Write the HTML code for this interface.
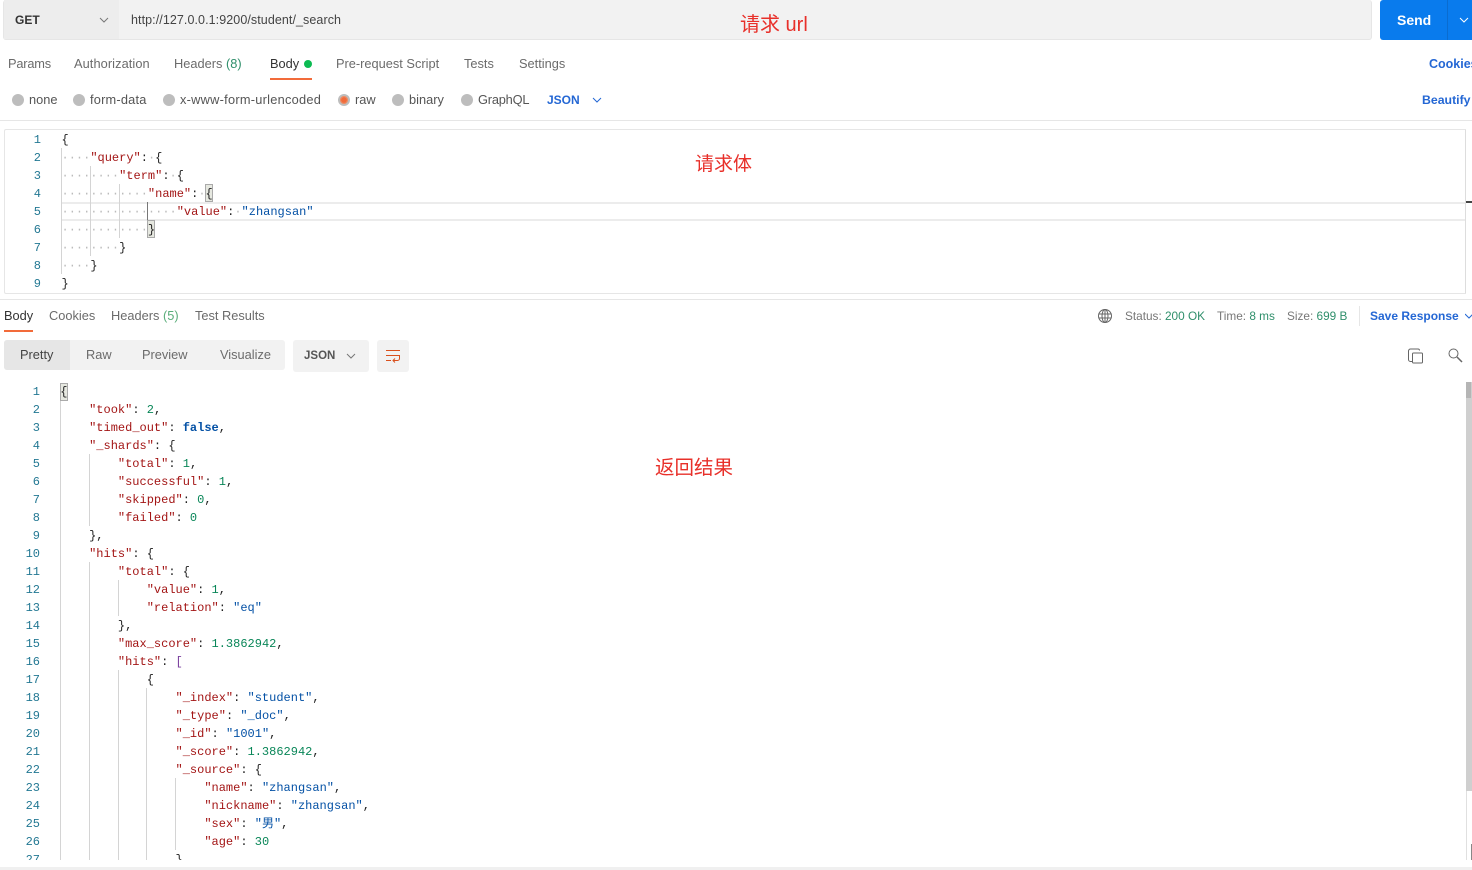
<!DOCTYPE html>
<html><head><meta charset="utf-8"><style>
html,body{margin:0;padding:0;background:#fff;width:1472px;height:870px;overflow:hidden}
body{position:relative;font-family:"Liberation Sans",sans-serif;font-size:12.8px;color:#6b6b6b}
.a{position:absolute;white-space:nowrap;line-height:16px}
.r{position:absolute;width:12px;height:12px;border-radius:50%;background:#bdbdbd;top:94px}
.g{position:absolute;width:1px;background:#d4d4d4}
pre{position:absolute;margin:0;font-family:"Liberation Mono","Noto Sans CJK SC",monospace;font-size:12px;line-height:18px;color:#222}
pre div{height:18px;white-space:pre}
.n{color:#237893;text-align:right}
.k{color:#a31515}.s{color:#0451a5}.v{color:#098658}.b{color:#0451a5;font-weight:bold}.d{color:#bbb}.p{color:#7a3e9d}
.t{color:#e8302a;font-family:"Liberation Sans","Noto Sans CJK SC",sans-serif;position:absolute;white-space:nowrap;line-height:26px}
.bl{color:#2467d4;font-weight:bold}
.gr{color:#2f8f6b}
</style></head><body>
<div style="position:absolute;left:3px;top:0;width:1367px;height:39px;background:#f2f2f2;border:1px solid #e6e6e6;border-top:0;border-radius:3px"></div>
<div style="position:absolute;left:4px;top:0;width:115px;height:39px;background:#ededed"></div>
<div class="a" style="left:15px;top:12px;font-weight:bold;color:#333;font-size:12px">GET</div>
<svg style="position:absolute;left:99px;top:17px" width="10" height="6"><path d="M1 1l4 4 4-4" fill="none" stroke="#777"/></svg>
<div class="a" style="left:131px;top:12px;color:#444;font-size:12.5px;letter-spacing:.08px">http://127.0.0.1:9200/student/_search</div>
<div style="position:absolute;left:1380px;top:0;width:92px;height:40px;background:#097bed;border-radius:3px 0 0 3px"></div>
<div style="position:absolute;left:1447px;top:0;width:1px;height:40px;background:#0a6cd0"></div>
<div class="a" style="left:1397px;top:12px;color:#fff;font-weight:bold;font-size:14px">Send</div>
<svg style="position:absolute;left:1459px;top:17px" width="10" height="6"><path d="M1 1l4 4 4-4" fill="none" stroke="#fff"/></svg>
<div class="t" style="left:740px;top:12px;font-size:20px">请求 url</div>

<div class="a" style="left:8px;top:56px;letter-spacing:-.2px">Params</div>
<div class="a" style="left:74px;top:56px;letter-spacing:.08px">Authorization</div>
<div class="a" style="left:174px;top:56px">Headers <span class="gr">(8)</span></div>
<div class="a" style="left:270px;top:56px;color:#333">Body</div>
<div style="position:absolute;left:304px;top:60px;width:8px;height:8px;border-radius:50%;background:#0cbb52"></div>
<div style="position:absolute;left:270px;top:78px;width:42px;height:2px;background:#f26b3a"></div>
<div class="a" style="left:336px;top:56px">Pre-request Script</div>
<div class="a" style="left:464px;top:56px">Tests</div>
<div class="a" style="left:519px;top:56px">Settings</div>
<div class="a bl" style="left:1429px;top:56px;font-size:12.5px">Cookies</div>

<div class="r" style="left:12px"></div><div class="a" style="left:29px;top:92px;color:#555">none</div>
<div class="r" style="left:73px"></div><div class="a" style="left:90px;top:92px;color:#555;letter-spacing:.2px">form-data</div>
<div class="r" style="left:163px"></div><div class="a" style="left:180px;top:92px;color:#555;letter-spacing:.25px">x-www-form-urlencoded</div>
<div class="r" style="left:338px"></div><div style="position:absolute;left:341px;top:97px;width:6px;height:6px;border-radius:50%;background:#f26b3a;outline:1px solid #f08a60"></div><div class="a" style="left:355px;top:92px;color:#555">raw</div>
<div class="r" style="left:392px"></div><div class="a" style="left:409px;top:92px;color:#555">binary</div>
<div class="r" style="left:461px"></div><div class="a" style="left:478px;top:92px;color:#555;letter-spacing:-.2px">GraphQL</div>
<div class="a bl" style="left:547px;top:92px;font-size:12px">JSON</div>
<svg style="position:absolute;left:592px;top:97px" width="10" height="6"><path d="M1 1l4 4 4-4" fill="none" stroke="#2467d4"/></svg>
<div class="a bl" style="left:1422px;top:92px;font-size:12.300px">Beautify</div>
<div style="position:absolute;left:0;top:120px;width:1472px;height:1px;background:#e6e6e6"></div>

<div style="position:absolute;left:4px;top:129px;width:1460px;height:163px;border:1px solid #e6e6e6;border-right:1px solid #ddd;border-radius:2px 0 0 2px"></div>
<div style="position:absolute;left:62px;top:202px;width:1403px;height:15px;border:solid #ececec;border-width:2px 0"></div>
<div style="position:absolute;left:1466px;top:201px;width:6px;height:2px;background:#444"></div>
<div class="g" style="left:61px;top:148px;height:126px"></div>
<div class="g" style="left:90px;top:166px;height:90px"></div>
<div class="g" style="left:119px;top:184px;height:54px"></div>
<div class="g" style="left:147px;top:202px;height:18px;background:#777"></div>
<div style="position:absolute;left:205px;top:184px;width:6px;height:16px;background:#e6e8e0;border:1px solid #aaa"></div>
<div style="position:absolute;left:147px;top:220px;width:6px;height:16px;background:#e6e8e0;border:1px solid #aaa"></div>
<pre class="n" style="left:10px;top:131px;width:31px"><div>1</div><div>2</div><div>3</div><div>4</div><div>5</div><div>6</div><div>7</div><div>8</div><div>9</div></pre>
<pre style="left:61.500px;top:131px"><div>{</div><div><span class="d">····</span><span class="k">"query"</span>:<span class="d">·</span>{</div><div><span class="d">········</span><span class="k">"term"</span>:<span class="d">·</span>{</div><div><span class="d">············</span><span class="k">"name"</span>:<span class="d">·</span>{</div><div><span class="d">················</span><span class="k">"value"</span>:<span class="d">·</span><span class="s">"zhangsan"</span></div><div><span class="d">············</span>}</div><div><span class="d">········</span>}</div><div><span class="d">····</span>}</div><div>}</div></pre>
<div class="t" style="left:695px;top:152px;font-size:19px">请求体</div>

<div style="position:absolute;left:0;top:299px;width:1472px;height:1px;background:#e6e6e6"></div>
<div class="a" style="left:4px;top:308px;color:#333">Body</div>
<div style="position:absolute;left:4px;top:330px;width:29px;height:2px;background:#f26b3a"></div>
<div class="a" style="left:49px;top:308px">Cookies</div>
<div class="a" style="left:111px;top:308px">Headers <span style="color:#5aad7a">(5)</span></div>
<div class="a" style="left:195px;top:308px">Test Results</div>
<svg style="position:absolute;left:1098px;top:309px" width="14" height="14" fill="none" stroke="#666"><circle cx="7" cy="7" r="6.5"/><ellipse cx="7" cy="7" rx="3" ry="6.5"/><path d="M1 5h12M1 9h12M7 .5v13"/></svg>
<div class="a" style="left:1125px;top:308px;font-size:11.800px;color:#777">Status: <span class="gr">200 OK</span></div>
<div class="a" style="left:1217px;top:308px;font-size:11.800px;color:#777">Time: <span class="gr">8 ms</span></div>
<div class="a" style="left:1287px;top:308px;font-size:11.800px;color:#777">Size: <span class="gr">699 B</span></div>
<div style="position:absolute;left:1359px;top:306px;width:1px;height:20px;background:#e6e6e6"></div>
<div class="a bl" style="left:1370px;top:308px;font-size:12px">Save Response</div>
<svg style="position:absolute;left:1465px;top:313px" width="8" height="6"><path d="M0 1l4 4 4-4" fill="none" stroke="#2467d4"/></svg>

<div style="position:absolute;left:4px;top:340px;width:281px;height:30px;background:#f2f2f2;border-radius:3px"></div>
<div style="position:absolute;left:4px;top:340px;width:66px;height:30px;background:#e6e6e6;border-radius:3px 0 0 3px"></div>
<div class="a" style="left:20px;top:347px;color:#444">Pretty</div>
<div class="a" style="left:86px;top:347px">Raw</div>
<div class="a" style="left:142px;top:347px">Preview</div>
<div class="a" style="left:220px;top:347px">Visualize</div>
<div style="position:absolute;left:293px;top:340px;width:76px;height:32px;background:#f2f2f2;border-radius:3px"></div>
<div class="a" style="left:304px;top:348px;font-size:11.500px;font-weight:bold;color:#555">JSON</div>
<svg style="position:absolute;left:346px;top:353px" width="10" height="6"><path d="M1 1l4 4 4-4" fill="none" stroke="#777"/></svg>
<div style="position:absolute;left:377px;top:340px;width:32px;height:32px;background:#f2f2f2;border-radius:3px"></div>
<svg style="position:absolute;left:385px;top:349px" width="16" height="14" fill="none" stroke="#d9501e"><path d="M1 1.500h14M1 6.500h14M1 11.500h5M14.500 6.500v3a2 2 0 0 1-2 2H8M10 9.500l-2 2 2 2"/></svg>
<svg style="position:absolute;left:1408px;top:348px" width="16" height="16" fill="none" stroke="#666"><path d="M4 13.500H2.500a2 2 0 0 1-2-2V3a2 2 0 0 1 2-2H10a1.500 1.500 0 0 1 1.500 1.500"/><rect x="4.500" y="5" width="10" height="10" rx="1"/></svg>
<svg style="position:absolute;left:1448px;top:348px" width="15" height="15" fill="none" stroke="#666"><circle cx="5.500" cy="5.500" r="4.500"/><path d="M9 9l5 5" stroke-width="1.500"/></svg>

<div style="position:absolute;left:0;top:382px;width:1466px;height:478px;overflow:hidden">
<div class="g" style="left:60px;top:18px;height:460px"></div>
<div class="g" style="left:89px;top:72px;height:72px"></div>
<div class="g" style="left:89px;top:180px;height:300px"></div>
<div class="g" style="left:118px;top:198px;height:36px"></div>
<div class="g" style="left:118px;top:288px;height:190px"></div>
<div class="g" style="left:146px;top:306px;height:172px"></div>
<div class="g" style="left:175px;top:396px;height:72px"></div>
<div style="position:absolute;left:60px;top:1px;width:6px;height:16px;background:#e6e8e0;border:1px solid #aaa"></div>
<pre class="n" style="left:9px;top:1px;width:31px"><div>1</div><div>2</div><div>3</div><div>4</div><div>5</div><div>6</div><div>7</div><div>8</div><div>9</div><div>10</div><div>11</div><div>12</div><div>13</div><div>14</div><div>15</div><div>16</div><div>17</div><div>18</div><div>19</div><div>20</div><div>21</div><div>22</div><div>23</div><div>24</div><div>25</div><div>26</div><div>27</div></pre>
<pre style="left:60.300px;top:1px"><div>{</div><div>    <span class="k">"took"</span>: <span class="v">2</span>,</div><div>    <span class="k">"timed_out"</span>: <span class="b">false</span>,</div><div>    <span class="k">"_shards"</span>: {</div><div>        <span class="k">"total"</span>: <span class="v">1</span>,</div><div>        <span class="k">"successful"</span>: <span class="v">1</span>,</div><div>        <span class="k">"skipped"</span>: <span class="v">0</span>,</div><div>        <span class="k">"failed"</span>: <span class="v">0</span></div><div>    },</div><div>    <span class="k">"hits"</span>: {</div><div>        <span class="k">"total"</span>: {</div><div>            <span class="k">"value"</span>: <span class="v">1</span>,</div><div>            <span class="k">"relation"</span>: <span class="s">"eq"</span></div><div>        },</div><div>        <span class="k">"max_score"</span>: <span class="v">1.3862942</span>,</div><div>        <span class="k">"hits"</span>: <span class="p">[</span></div><div>            {</div><div>                <span class="k">"_index"</span>: <span class="s">"student"</span>,</div><div>                <span class="k">"_type"</span>: <span class="s">"_doc"</span>,</div><div>                <span class="k">"_id"</span>: <span class="s">"1001"</span>,</div><div>                <span class="k">"_score"</span>: <span class="v">1.3862942</span>,</div><div>                <span class="k">"_source"</span>: {</div><div>                    <span class="k">"name"</span>: <span class="s">"zhangsan"</span>,</div><div>                    <span class="k">"nickname"</span>: <span class="s">"zhangsan"</span>,</div><div>                    <span class="k">"sex"</span>: <span class="s">"男"</span>,</div><div>                    <span class="k">"age"</span>: <span class="v">30</span></div><div>                }</div></pre>
</div>
<div class="t" style="left:655px;top:455px;font-size:19.500px">返回结果</div>

<div style="position:absolute;left:1466px;top:382px;width:6px;height:409px;background:#cfcfcf"></div>
<div style="position:absolute;left:1466px;top:382px;width:5px;height:16px;background:#b5b5b5"></div>
<div style="position:absolute;left:1466px;top:791px;width:1px;height:69px;background:#e0e0e0"></div>
<div style="position:absolute;left:1471px;top:844px;width:1px;height:16px;background:#888"></div>
<div style="position:absolute;left:0;top:867px;width:1472px;height:3px;background:#f0f0f0"></div>
</body></html>
